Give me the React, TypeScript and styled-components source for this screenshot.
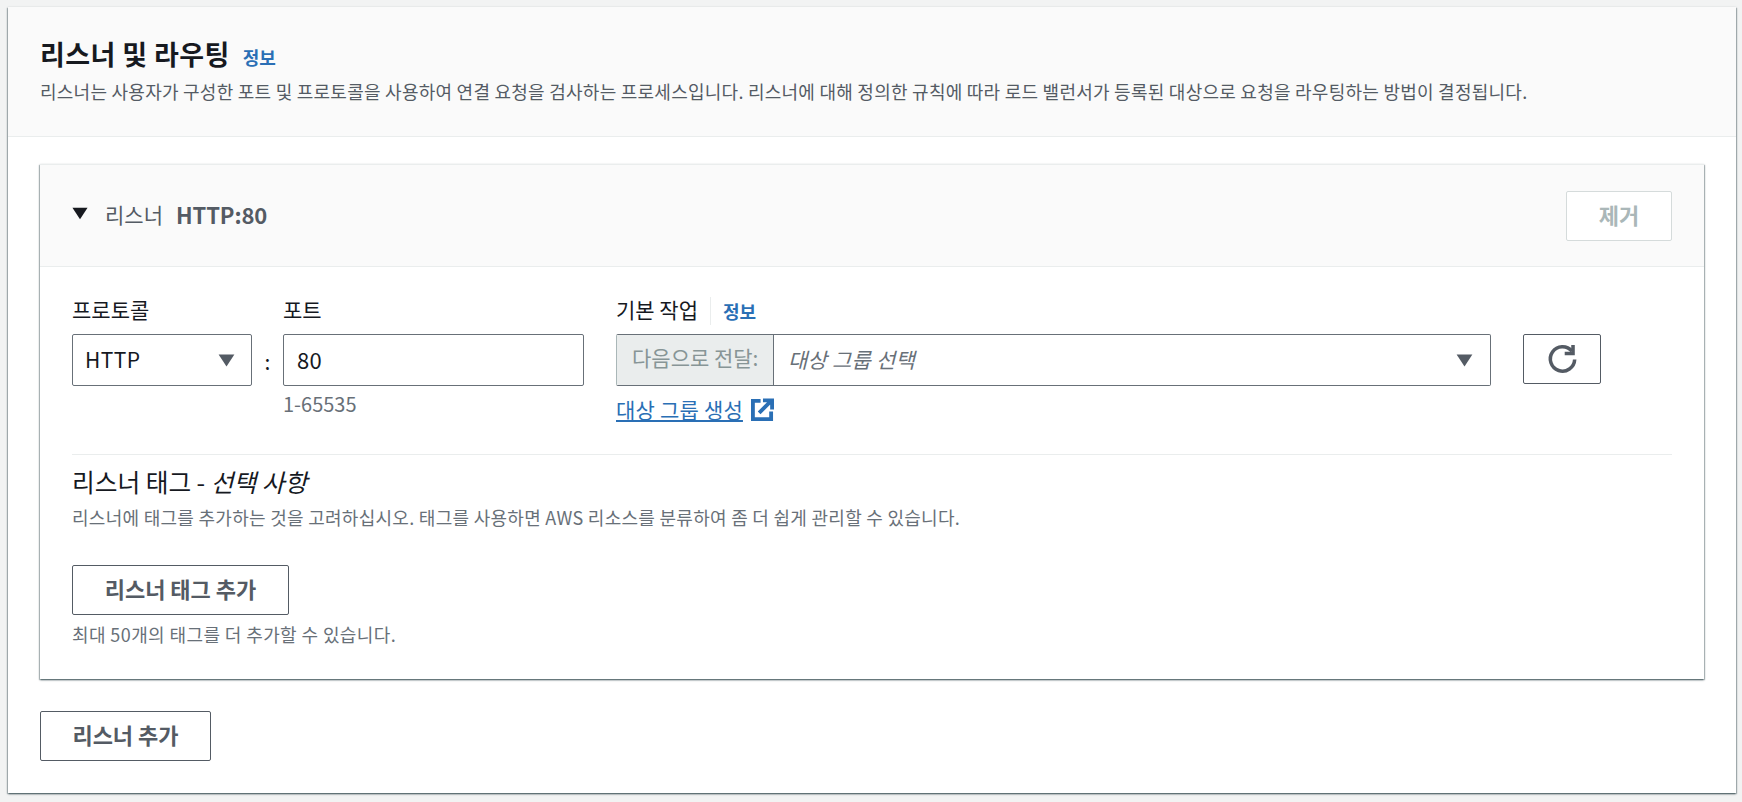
import { createGlobalStyle } from "styled-components"
import styled from "styled-components"

const GlobalStyle = createGlobalStyle`
  html, body {
    margin: 0;
    height: 802px;
    overflow: hidden;
    background: #f2f3f3;
    color: #16191f;
    font-family: "Noto Sans CJK KR", "Noto Sans", sans-serif;
    font-size: 18px;
  }
`

const Page = styled.div`
  padding: 7px 6px 0 8px;
`

const Outer = styled.section`
  height: 786px;
  box-sizing: border-box;
  background: #fff;
  box-shadow: 0 1px 2px 0 rgba(0, 28, 36, 0.55), 1px 1px 1px 0 rgba(0, 28, 36, 0.2), -1px 1px 1px 0 rgba(0, 28, 36, 0.2);
`

const OuterHeader = styled.header`
  height: 130px;
  box-sizing: border-box;
  padding: 30px 32px 0;
  background: #fafafa;
  border-bottom: 1px solid #eaeded;
`

const Title = styled.h2`
  display: flex;
  align-items: baseline;
  gap: 13px;
  margin: 0;
  font-size: 27px;
  line-height: 34px;
  font-weight: 700;
  letter-spacing: 0.4px;
`

const Info = styled.a`
  font-size: 18px;
  font-weight: 700;
  letter-spacing: 0;
  color: #2a6fb5;
`

const Description = styled.p`
  margin: 5px 0 0;
  font-size: 18px;
  line-height: 24px;
  letter-spacing: 0.25px;
  white-space: nowrap;
  color: #545b64;
`

const Body = styled.div`
  padding: 27px 32px 0;
`

const ListenerCard = styled.div`
  height: 515px;
  box-sizing: border-box;
  background: #fff;
  box-shadow: 0 1px 2px 0 rgba(0, 28, 36, 0.55), 1px 1px 1px 0 rgba(0, 28, 36, 0.2), -1px 1px 1px 0 rgba(0, 28, 36, 0.2);
`

const CardHeader = styled.div`
  height: 103px;
  box-sizing: border-box;
  padding: 0 32px;
  display: flex;
  align-items: center;
  justify-content: space-between;
  background: #fafafa;
  border-top: 1px solid #eaeded;
  border-bottom: 1px solid #eaeded;
`

const CardTitle = styled.div`
  display: flex;
  align-items: center;
  padding-bottom: 3px;
  font-size: 21px;
  color: #545b64;

  strong {
    margin-left: 13px;
    font-weight: 700;
    font-size: 22px;
    letter-spacing: -0.1px;
  }
`

const CaretIcon = styled.svg`
  display: block;
  flex: none;
`

const CollapseCaret = styled(CaretIcon)`
  margin-right: 17px;
  margin-top: -1px;
`

const Button = styled.button<{ $width: number; $disabled?: boolean }>`
  width: ${p => p.$width}px;
  height: 50px;
  box-sizing: border-box;
  padding: 0 0 4px;
  border-radius: 2px;
  font-family: inherit;
  font-size: 22px;
  font-weight: 700;
  background: #fff;
  color: ${p => (p.$disabled ? "#aab7b8" : "#545b64")};
  border: 1px solid ${p => (p.$disabled ? "#d5dbdb" : "#545b64")};
`

const CardBody = styled.div`
  padding: 29px 32px 0;
`

const FormRow = styled.div`
  display: flex;
  align-items: flex-start;
`

const Field = styled.div<{ $width: number; $offset?: number }>`
  width: ${p => p.$width}px;
  margin-left: ${p => p.$offset ?? 0}px;
  flex: none;
`

const Label = styled.label`
  display: flex;
  align-items: center;
  height: 30px;
  box-sizing: border-box;
  padding-bottom: 3px;
  margin-bottom: 8px;
  font-size: 21px;
  line-height: 27px;
  color: #16191f;
`

const LabelInfo = styled(Info)`
  margin: 0 0 -3px 12px;
  padding-left: 12px;
  border-left: 1px solid #eaeded;
  line-height: 28px;
`

const SelectBox = styled.div`
  height: 52px;
  box-sizing: border-box;
  display: flex;
  align-items: center;
  justify-content: space-between;
  padding: 0 16px 2px 12px;
  border: 1px solid #687078;
  border-radius: 2px;
  font-size: 21px;
  letter-spacing: 0.4px;
  background: #fff;

  svg {
    margin-top: 2px;
  }
`

const Colon = styled.div`
  width: 31px;
  flex: none;
  margin-top: 38px;
  line-height: 54px;
  text-align: center;
  font-size: 21px;
`

const PortInput = styled(SelectBox)`
  padding: 0 13px 3px;
  font-size: 22px;
`

const Hint = styled.div`
  margin-top: 7px;
  font-size: 20px;
  line-height: 22px;
  color: #687078;
`

const GroupSelect = styled.div`
  height: 52px;
  box-sizing: border-box;
  display: flex;
  border: 1px solid #687078;
  border-left-color: #aab7b8;
  border-radius: 2px;
`

const Addon = styled.div`
  width: 157px;
  flex: none;
  box-sizing: border-box;
  padding-left: 15px;
  line-height: 45px;
  font-size: 21px;
  color: #879596;
  background: #eaeded;
  border-right: 1px solid #687078;
  white-space: nowrap;
  overflow: hidden;
`

const GroupValue = styled.div`
  flex: 1;
  display: flex;
  align-items: center;
  justify-content: space-between;
  padding: 0 17px 3px 14px;
  font-size: 21px;
  font-style: italic;
  letter-spacing: 0.2px;
  color: #687078;

  svg {
    margin-top: 3px;
  }
`

const CreateLink = styled.a`
  display: inline-flex;
  align-items: center;
  gap: 8px;
  margin-top: 10px;
  font-size: 21px;
  line-height: 26px;
  letter-spacing: 0.2px;
  color: #2a6fb5;
  text-decoration: underline;
`

const RefreshButton = styled.button`
  width: 78px;
  height: 50px;
  box-sizing: border-box;
  margin: 38px 0 0 32px;
  padding: 0;
  display: flex;
  align-items: center;
  justify-content: center;
  background: #fff;
  border: 1px solid #545b64;
  border-radius: 2px;
`

const Divider = styled.hr`
  height: 1px;
  margin: 31px 0 0;
  border: 0;
  background: #eaeded;
`

const TagTitle = styled.h3`
  margin: 9px 0 0;
  font-size: 24.7px;
  line-height: 34px;
  font-weight: 400;

  em {
    font-style: italic;
  }
`

const TagDescription = styled.p`
  margin: 8px 0 0;
  font-size: 18px;
  line-height: 22px;
  letter-spacing: 0.28px;
  color: #687078;
`

const TagButton = styled(Button)`
  display: block;
  margin-top: 37px;
`

const TagNote = styled(TagDescription)`
  margin-top: 8px;
  letter-spacing: 0.4px;
`

const AddListener = styled(Button)`
  display: block;
  margin-top: 32px;
`

const Caret = ({ color }: { color: string }) => (
  <CaretIcon width={17} height={13} viewBox="0 0 18 14">
    <path d="M0.5 0.5h17L9 13.5z" fill={color} />
  </CaretIcon>
)

const App = () => {
  return (
    <Page>
      <GlobalStyle />
      <Outer>
        <OuterHeader>
          <Title>
            리스너 및 라우팅 <Info>정보</Info>
          </Title>
          <Description>
            리스너는 사용자가 구성한 포트 및 프로토콜을 사용하여 연결 요청을 검사하는 프로세스입니다. 리스너에 대해 정의한 규칙에 따라 로드 밸런서가 등록된 대상으로 요청을 라우팅하는 방법이 결정됩니다.
          </Description>
        </OuterHeader>
        <Body>
          <ListenerCard>
            <CardHeader>
              <CardTitle>
                <CollapseCaret width={16} height={13} viewBox="0 0 18 14">
                  <path d="M0.5 0.5h17L9 13.5z" fill="#16191f" />
                </CollapseCaret>
                리스너 <strong>HTTP:80</strong>
              </CardTitle>
              <Button $width={106} $disabled>
                제거
              </Button>
            </CardHeader>
            <CardBody>
              <FormRow>
                <Field $width={180}>
                  <Label>프로토콜</Label>
                  <SelectBox>
                    HTTP
                    <Caret color="#545b64" />
                  </SelectBox>
                </Field>
                <Colon>:</Colon>
                <Field $width={301}>
                  <Label>포트</Label>
                  <PortInput>80</PortInput>
                  <Hint>1-65535</Hint>
                </Field>
                <Field $width={875} $offset={32}>
                  <Label>
                    기본 작업 <LabelInfo>정보</LabelInfo>
                  </Label>
                  <GroupSelect>
                    <Addon>다음으로 전달:</Addon>
                    <GroupValue>
                      대상 그룹 선택
                      <Caret color="#545b64" />
                    </GroupValue>
                  </GroupSelect>
                  <CreateLink>
                    대상 그룹 생성
                    <svg width="23" height="23" viewBox="0 0 24 24" fill="none" stroke="#2a6fb5" strokeWidth="4">
                      <path d="M10 3H2v19h19v-8" />
                      <path d="M8.5 15.5L21 3M12.5 2.5h9.5v9.5" />
                    </svg>
                  </CreateLink>
                </Field>
                <RefreshButton aria-label="새로 고침">
                  <svg width="31" height="31" viewBox="0 0 28 28" fill="none" stroke="#545b64" strokeWidth="3.2">
                    <path d="M22.5 6.5A11 11 0 1 0 25 14" />
                    <path d="M23.5 1v7.5H16" />
                  </svg>
                </RefreshButton>
              </FormRow>
              <Divider />
              <TagTitle>
                리스너 태그 - <em>선택 사항</em>
              </TagTitle>
              <TagDescription>
                리스너에 태그를 추가하는 것을 고려하십시오. 태그를 사용하면 AWS 리소스를 분류하여 좀 더 쉽게 관리할 수 있습니다.
              </TagDescription>
              <TagButton $width={217}>리스너 태그 추가</TagButton>
              <TagNote>최대 50개의 태그를 더 추가할 수 있습니다.</TagNote>
            </CardBody>
          </ListenerCard>
          <AddListener $width={171}>리스너 추가</AddListener>
        </Body>
      </Outer>
    </Page>
  )
}

export default App
